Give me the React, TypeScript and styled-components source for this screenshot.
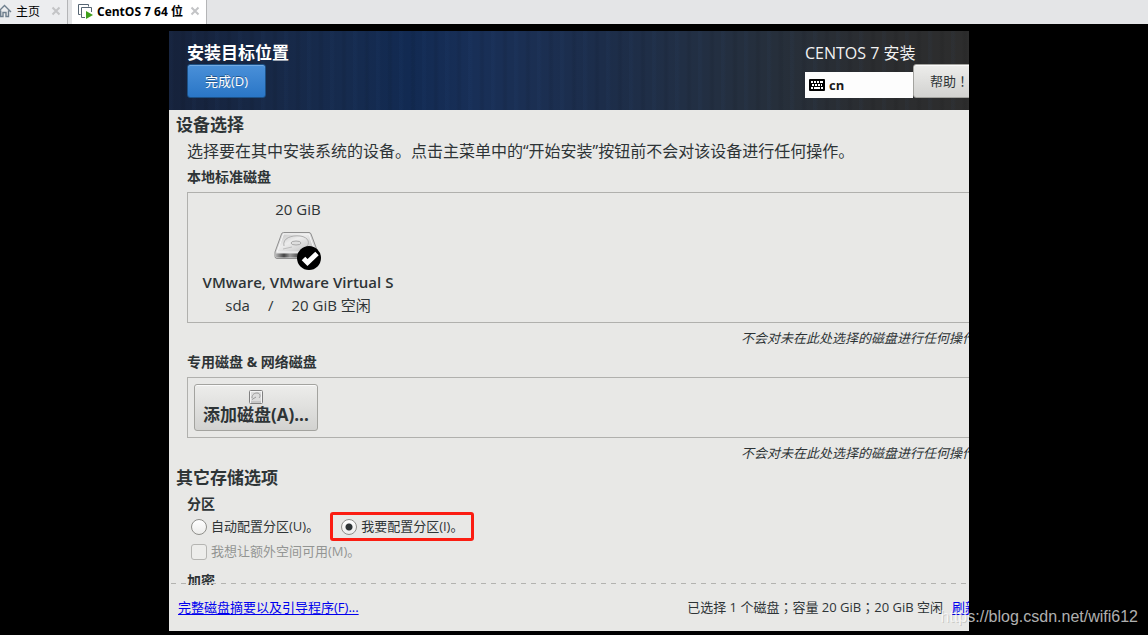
import React from 'react';
import styled, { createGlobalStyle, css } from 'styled-components';

const GlobalStyle = createGlobalStyle`
  * { box-sizing: border-box; }
  body {
    margin: 0;
    background: #000;
    font-family: "Open Sans", "Noto Sans CJK SC", sans-serif;
    font-size: 13px;
    color: #2e3436;
  }
  button, input { font-family: inherit; margin: 0; }
  h1, h2, h3, p { margin: 0; }
`;

const Page = styled.div`
  position: relative;
  display: flex;
  flex-direction: column;
  height: 100vh;
  overflow: hidden;
`;

const TabBar = styled.nav`
  display: flex;
  flex: none;
  gap: 4px;
  height: 24px;
  background: #e4e5e7;
`;

const Tab = styled.div<{ $active?: boolean }>`
  display: flex;
  align-items: center;
  justify-content: space-between;
  width: ${(p) => (p.$active ? 135 : 68)}px;
  padding: 0 6px 2px ${(p) => (p.$active ? 6 : 0)}px;
  border-right: 1px solid #b4b5b7;
  background: ${(p) => (p.$active ? '#fff' : '#ecedef')};
`;

const TabLabel = styled.button<{ $active?: boolean }>`
  display: flex;
  align-items: center;
  gap: 4px;
  padding: 0;
  border: 0;
  background: none;
  font-size: 12px;
  font-weight: ${(p) => (p.$active ? 700 : 400)};
  color: #000;
  white-space: nowrap;
`;

const TabClose = styled.button`
  display: flex;
  padding: 0;
  border: 0;
  background: none;
`;

const Stage = styled.main`
  display: flex;
  flex: 1;
  min-height: 0;
  padding: 7px 179px 4px 169px;
`;

const Installer = styled.div`
  display: flex;
  flex: 1;
  flex-direction: column;
  min-width: 0;
  overflow: hidden;
  background: #e8e8e6;
`;

/* The guest display is wider than the viewport, so rows run past its right edge. */
const overhang = css`
  width: calc(100% + 37px);
`;

const HeaderBackdrop = styled.header`
  flex: none;
  background:
    repeating-linear-gradient(90deg, rgba(60, 110, 180, 0.04) 0 3px, transparent 5px 11px, rgba(0, 0, 0, 0.06) 13px 15px, transparent 17px 23px),
    linear-gradient(90deg, #16223b 0%, #172846 12%, #162b4e 22%, #122a52 30%, #182f57 38%, #1b2f52 46%, #1c2d4a 54%, #212f45 64%, #262f3b 76%, #2b2d30 88%, #2d2d2d 100%);
`;

const HeaderRow = styled.div`
  ${overhang}
  display: flex;
  justify-content: space-between;
  padding: 11px 20px 12px 18px;
`;

const ScreenTitle = styled.h1`
  font-size: 17px;
  font-weight: 700;
  line-height: 22px;
  color: #fff;
`;

const ProductTitle = styled.p`
  font-size: 16px;
  line-height: 22px;
  color: #f2f2f2;
`;

const HeaderControls = styled.div`
  display: flex;
  align-items: flex-end;
`;

const Button = styled.button<{ $primary?: boolean }>`
  height: 34px;
  padding: 0 16px 2px;
  border: 1px solid #a3a39f;
  border-radius: 3px;
  background: linear-gradient(#ededeb, #d2d2d0);
  box-shadow: inset 0 1px #fafafa;
  font-size: 13px;
  color: #2e3436;
  white-space: nowrap;
  ${(p) =>
    p.$primary &&
    css`
      min-width: 79px;
      border-color: #1c5187;
      background: linear-gradient(#4a90d9, #2a76c6);
      box-shadow: inset 0 1px #74abe3;
      color: #fff;
      text-shadow: 0 -1px rgba(0, 0, 0, 0.35);
    `}
`;

const KeyboardLayout = styled.button`
  display: flex;
  align-items: center;
  gap: 4px;
  width: 108px;
  height: 26px;
  padding: 0 4px;
  border: 0;
  background: #fdfdfd;
  font-size: 13px;
  font-weight: 700;
  line-height: 18px;
  color: #1a1a1a;
`;

/* Full-width punctuation that sits in the middle of its cell. */
const MidPunct = styled.span`
  font-family: "Noto Sans CJK TC", sans-serif;
  line-height: 1;
`;

const ScrollArea = styled.div`
  position: relative;
  flex: 1;
  min-height: 0;
  overflow: hidden;
`;

const MoreBelow = styled.div`
  position: absolute;
  left: 2px;
  right: 0;
  bottom: 1px;
  height: 1px;
  background: repeating-linear-gradient(90deg, #b3b3b0 0 5px, transparent 5px 10px);
`;

const Content = styled.div`
  ${overhang}
  padding: 2px 18px 0 7px;
`;

const SectionTitle = styled.h2`
  margin-bottom: 1px;
  font-size: 17px;
  font-weight: 700;
  line-height: 26px;
`;

const SectionBody = styled.section`
  padding-left: 11px;
`;

const Description = styled.p`
  padding-bottom: 2px;
  font-size: 16px;
  line-height: 24px;
  white-space: nowrap;
`;

const GroupTitle = styled.h3`
  margin-bottom: 3px;
  font-size: 14px;
  font-weight: 700;
  line-height: 24px;
`;

const DiskShelf = styled.div<{ $pad: string }>`
  display: flex;
  padding: ${(p) => p.$pad};
  border: 1px solid #b0b0ad;
`;

const Note = styled.p`
  padding-top: 3px;
  font-style: italic;
  line-height: 24px;
  text-align: right;
`;

const DiskCard = styled.button`
  display: flex;
  flex-direction: column;
  align-items: center;
  min-width: 196px;
  padding: 0;
  border: 0;
  background: none;
  font-size: 15px;
  line-height: 23px;
  color: #2e3436;
`;

const DiskName = styled.strong`
  font-weight: 600;
`;

const DiskDetails = styled.span`
  display: flex;
  gap: 18px;
`;

const DiskPicture = styled.svg`
  margin: 1px 0;
`;

const AddDisk = styled(Button)`
  display: flex;
  flex-direction: column;
  align-items: center;
  min-width: 122px;
  height: 47px;
  padding: 5px 8px 0;
  font-size: 17px;
  font-weight: 700;
  line-height: 22px;
`;

const Options = styled.div`
  display: flex;
  flex-direction: column;
  gap: 9px;
  padding-left: 4px;
  margin-bottom: 9px;
`;

const OptionRow = styled.div`
  display: flex;
  gap: 22px;
`;

const Option = styled.label<{ $disabled?: boolean }>`
  position: relative;
  display: flex;
  align-items: flex-start;
  gap: 4px;
  height: 16px;
  line-height: 14px;
  white-space: nowrap;
  color: ${(p) => (p.$disabled ? '#939593' : '#2e3436')};
`;

const Mark = styled.input`
  appearance: none;
  width: 16px;
  height: 16px;
  border: 1px solid #8f8f8b;
  border-radius: ${(p) => (p.type === 'radio' ? '50%' : '3px')};
  background: linear-gradient(#fff, #ececea);
  &:checked {
    background: radial-gradient(circle, #2e3436 0 3px, transparent 4px), linear-gradient(#fff, #ececea);
  }
  &:disabled {
    border-color: #b5b5b2;
    background: #ededeb;
  }
`;

const Highlight = styled.span`
  position: absolute;
  inset: -7px -11px -6px -11px;
  border: 3px solid #fb1d12;
  border-radius: 3px;
  pointer-events: none;
`;

const Footer = styled.footer`
  ${overhang}
  display: flex;
  flex: none;
  justify-content: space-between;
  align-items: center;
  height: 46px;
  padding: 0 28px 2px 9px;
  line-height: 20px;
  white-space: nowrap;
`;

const Summary = styled.div`
  display: flex;
  gap: 9px;
`;

const Link = styled.a`
  color: #00e;
  text-decoration: underline;
  text-underline-offset: 2px;
`;

const Watermark = styled.span`
  position: absolute;
  right: 10px;
  bottom: 7px;
  font-family: "Liberation Sans", Arial, sans-serif;
  font-size: 16px;
  line-height: 22px;
  color: rgba(255, 255, 255, 0.7);
  text-shadow: 1px 1px rgba(0, 0, 0, 0.15);
`;

const HomeIcon = () => (
  <svg width="12" height="14" viewBox="0 0 12 14" fill="none" stroke="#6f7f8e" strokeWidth="1.4">
    <path d="M-2 8 4.500 1.500 11 8M0.700 6.500V12.500H3V8.500H6V12.500H8.500V6.500" />
  </svg>
);

const MachineIcon = () => (
  <svg width="15" height="15" viewBox="0 0 15 15" fill="none">
    <path d="M2.500 10.500H.500V.500H10.500V2.500" stroke="#566573" />
    <path d="M13.500 8V3.500H3.500V13.500H7" stroke="#566573" />
    <path d="M8 7 15 11 8 15Z" fill="#3fa01c" />
  </svg>
);

const CloseIcon = () => (
  <svg width="10" height="10" viewBox="0 0 10 10" stroke="#c3c4c6" strokeWidth="2">
    <path d="M1.500 1.500 8.500 8.500M8.500 1.500 1.500 8.500" />
  </svg>
);

const KeyboardIcon = () => (
  <svg width="16" height="12" viewBox="0 0 16 12">
    <rect width="16" height="12" rx="1" fill="#000" />
    <path
      d="M2 3H4M5 3H7M8 3H10M11 3H14M3 6H5M6 6H8M9 6H11M12 6H13M2 9H4M5 9H11M12 9H14"
      stroke="#fff"
      strokeWidth="2"
    />
  </svg>
);

const DiskIcon = () => (
  <DiskPicture width="48" height="48" viewBox="0 0 48 48">
    <defs>
      <linearGradient id="lid" x1="0" y1="0" x2="1" y2="1">
        <stop offset="0" stopColor="#c2c2c2" />
        <stop offset=".4" stopColor="#ececec" />
        <stop offset=".7" stopColor="#d4d4d4" />
        <stop offset="1" stopColor="#b4b4b4" />
      </linearGradient>
      <linearGradient id="front" x1="0" y1="0" x2="1" y2="0">
        <stop offset="0" stopColor="#b0b0b0" />
        <stop offset=".2" stopColor="#444" />
        <stop offset=".35" stopColor="#999" />
        <stop offset=".6" stopColor="#444" />
        <stop offset="1" stopColor="#777" />
      </linearGradient>
    </defs>
    <path d="M9.500 10.500H35Q36.500 10.500 37 12L43 28V35Q43 36.500 41 36.500H3Q1 36.500 1 34.500V30L7.500 12Q8 10.500 9.500 10.500Z" fill="#dcdcdc" stroke="#8f8f8f" />
    <path d="M9.500 12H35L41 30H3Z" fill="url(#lid)" stroke="#f6f6f6" />
    <path d="M2 31.500H42V35.500H2Z" fill="url(#front)" />
    <path d="M10 24C8 16 18 13 26 14C35 15 37 22 31 26" fill="none" stroke="#b0b0b0" />
    <path d="M9 27 18 25" stroke="#bdbdbd" />
    <ellipse cx="22" cy="21" rx="5" ry="2" fill="#dedede" stroke="#a8a8a8" />
    <circle cx="35" cy="36" r="12" fill="#000" />
    <path d="M29.500 36.500 33.500 40.500 43 31.500" fill="none" stroke="#fff" strokeWidth="5" />
  </DiskPicture>
);

const SmallDiskIcon = () => (
  <svg width="14" height="14" viewBox="0 0 14 14">
    <rect x=".5" y=".5" width="13" height="13" rx="1" fill="#f4f4f4" stroke="#808080" />
    <path d="M2 2H12V11H2Z" fill="#dcdcdc" />
    <path d="M3 8C3 4 6 3 8 3C11 3 12 6 10 8" fill="none" stroke="#999" />
    <path d="M3 9.500 7 7M2 12H12" stroke="#999" />
  </svg>
);

export default function App() {
  return (
    <Page>
      <GlobalStyle />
      <TabBar>
        <Tab>
          <TabLabel>
            <HomeIcon />
            主页
          </TabLabel>
          <TabClose aria-label="关闭">
            <CloseIcon />
          </TabClose>
        </Tab>
        <Tab $active>
          <TabLabel $active>
            <MachineIcon />
            CentOS 7 64 位
          </TabLabel>
          <TabClose aria-label="关闭">
            <CloseIcon />
          </TabClose>
        </Tab>
      </TabBar>

      <Stage>
        <Installer>
          <HeaderBackdrop>
            <HeaderRow>
              <div>
                <ScreenTitle>安装目标位置</ScreenTitle>
                <Button $primary>完成(D)</Button>
              </div>
              <div>
                <ProductTitle>CENTOS 7 安装</ProductTitle>
                <HeaderControls>
                  <KeyboardLayout>
                    <KeyboardIcon />
                    cn
                  </KeyboardLayout>
                  <Button>
                    帮助<MidPunct>！</MidPunct>
                  </Button>
                </HeaderControls>
              </div>
            </HeaderRow>
          </HeaderBackdrop>

          <ScrollArea>
            <Content>
              <SectionTitle>设备选择</SectionTitle>
              <SectionBody>
                <Description>选择要在其中安装系统的设备。点击主菜单中的“开始安装”按钮前不会对该设备进行任何操作。</Description>
                <GroupTitle>本地标准磁盘</GroupTitle>
                <DiskShelf $pad="5px 12px">
                  <DiskCard>
                    <span>20 GiB</span>
                    <DiskIcon />
                    <DiskName>VMware, VMware Virtual S</DiskName>
                    <DiskDetails>
                      <span>sda</span>
                      <span>/</span>
                      <span>20 GiB 空闲</span>
                    </DiskDetails>
                  </DiskCard>
                </DiskShelf>
                <Note>不会对未在此处选择的磁盘进行任何操作。</Note>
                <GroupTitle>专用磁盘 &amp; 网络磁盘</GroupTitle>
                <DiskShelf $pad="6px">
                  <AddDisk>
                    <SmallDiskIcon />
                    添加磁盘(A)...
                  </AddDisk>
                </DiskShelf>
                <Note>不会对未在此处选择的磁盘进行任何操作。</Note>
              </SectionBody>

              <SectionTitle>其它存储选项</SectionTitle>
              <SectionBody>
                <GroupTitle>分区</GroupTitle>
                <Options>
                  <OptionRow>
                    <Option>
                      <Mark type="radio" name="partitioning" />
                      自动配置分区(U)。
                    </Option>
                    <Option>
                      <Mark type="radio" name="partitioning" defaultChecked />
                      我要配置分区(I)。
                      <Highlight />
                    </Option>
                  </OptionRow>
                  <Option $disabled>
                    <Mark type="checkbox" disabled />
                    我想让额外空间可用(M)。
                  </Option>
                </Options>
                <GroupTitle>加密</GroupTitle>
              </SectionBody>
            </Content>
            <MoreBelow />
          </ScrollArea>

          <Footer>
            <Link href="#summary">完整磁盘摘要以及引导程序(F)...</Link>
            <Summary>
              <span>
                已选择 1 个磁盘<MidPunct>；</MidPunct>容量 20 GiB<MidPunct>；</MidPunct>20 GiB 空闲
              </span>
              <Link href="#refresh">刷新</Link>
            </Summary>
          </Footer>
        </Installer>
      </Stage>
      <Watermark>https://blog.csdn.net/wifi612</Watermark>
    </Page>
  );
}
